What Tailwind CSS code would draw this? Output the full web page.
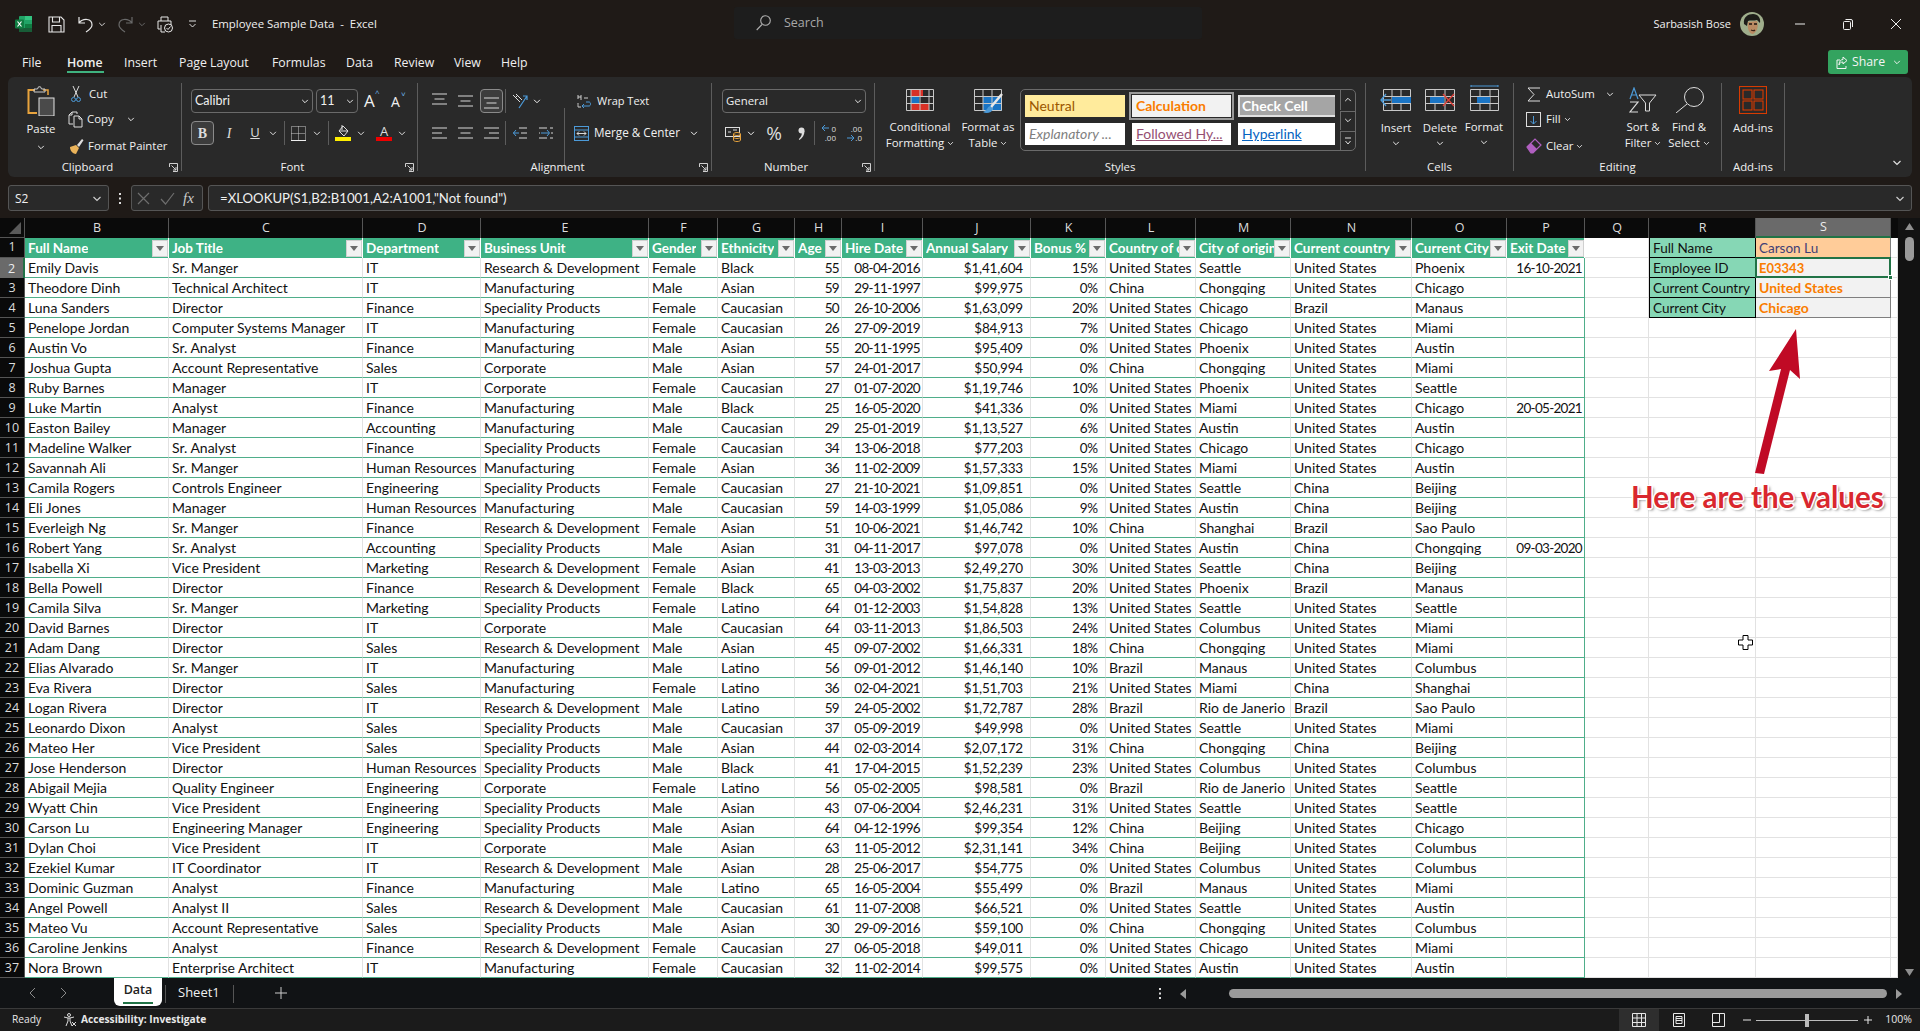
<!DOCTYPE html>
<html lang="en">
<head>
<meta charset="UTF-8">
<title>Employee Sample Data - Excel</title>
<script src="https://cdn.jsdelivr.net/npm/@tailwindcss/browser@4"></script>
</head>
<body class="bg-[#1f1a17]">
<svg class="hidden">
  <symbol id="chev" viewBox="0 0 10 6"><path d="M1.5 1l3.5 3.5L8.500 1" fill="none" stroke="currentColor" stroke-width="1.200"/></symbol>
  <symbol id="launch" viewBox="0 0 9 9"><path d="M.5 4V.5H8.500V8.500H4M2.500 2.500L7 7M7 4v3H4" fill="none" stroke="#d0d0d0" stroke-width="1"/></symbol>
  <symbol id="lines3" viewBox="0 0 15 12"><path d="M0 1h15M2.500 6h10M0 11h15" stroke="#d8d8d8" stroke-width="1" fill="none"/></symbol>
</svg>
<div class="w-[1920px] h-[1031px] flex flex-col overflow-hidden bg-[#1f1a17] text-[#f0f0f0] [font-family:'Open_Sans',sans-serif] text-[11.4px]">

  <!-- title bar -->
  <div class="h-[50px] shrink-0 flex items-center pb-[2px]">
    <div class="w-[212px] shrink-0 flex items-center pl-[15px]">
      <svg class="w-[17px] h-[16px]" viewBox="0 0 17 16"><rect x="4" width="13" height="16" rx="1" fill="#21a366"/><rect x="10" y="0" width="7" height="4" fill="#33c481"/><rect x="10" y="8" width="7" height="4" fill="#107c41"/><rect x="4" y="12" width="13" height="4" fill="#185c37"/><rect y="3.500" width="9" height="9" rx="1" fill="#107c41"/><path d="M2.500 5.500l4 5M6.500 5.500l-4 5" stroke="#fff" stroke-width="1.200"/></svg>
      <svg class="w-[17px] h-[17px] ml-[16px]" viewBox="0 0 17 17" fill="none" stroke="#e8e8e8" stroke-width="1.100"><path d="M1 1h12l3 3v12H1zM4.500 1v5h7V1M4 16v-6.500h9V16"/></svg>
      <svg class="w-[15px] h-[17px] ml-[13px]" viewBox="0 0 15 17" fill="none" stroke="#e8e8e8" stroke-width="1.200"><path d="M1 1v6h6M1 7c4-5 13-5 13 2 0 3-3 5-6 7"/></svg>
      <svg class="w-[8px] h-[5px] ml-[5px] text-[#ddd]"><use href="#chev"/></svg>
      <svg class="w-[15px] h-[17px] ml-[12px]" viewBox="0 0 15 17" fill="none" stroke="#6a6a6a" stroke-width="1.200"><path d="M14 1v6H8M14 7C10 2 1 2 1 9c0 3 3 5 6 7"/></svg>
      <svg class="w-[8px] h-[5px] ml-[5px] text-[#6a6a6a]"><use href="#chev"/></svg>
      <svg class="w-[17px] h-[17px] ml-[11px]" viewBox="0 0 17 17" fill="none" stroke="#e8e8e8" stroke-width="1"><path d="M4 5V1h7v4M3.500 13H1V5h13v4M4 9v7h4"/><circle cx="11.500" cy="12" r="4"/><path d="M9.500 12l1.500 1.500 2.500-3"/></svg>
      <svg class="w-[9px] h-[8px] ml-[14px]" viewBox="0 0 9 8" fill="none" stroke="#ddd" stroke-width="1"><path d="M1 1h7M1.500 4l3 3 3-3"/></svg>
    </div>
    <div class="w-[522px] shrink-0 whitespace-pre">Employee Sample Data  -  Excel</div>
    <div class="w-[468px] h-[32px] -mt-[2px] shrink-0 flex items-center pl-[22px] bg-[#1d1d1d] rounded-[3px] text-[#a8a8a8] text-[12.500px]">
      <svg class="w-[15px] h-[16px]" viewBox="0 0 15 16" fill="none" stroke="#b0b0b0" stroke-width="1.100"><circle cx="9.500" cy="5.500" r="4.800"/><path d="M6 9.500L.7 15"/></svg>
      <span class="ml-[13px]">Search</span>
    </div>
    <div class="flex-1"></div>
    <span class="mr-[9px] text-[11px]">Sarbasish Bose</span>
    <svg class="w-[24px] h-[24px]" viewBox="0 0 24 24"><circle cx="12" cy="12" r="12" fill="#9fae8c"/><path d="M4 12c-1-7 4-10 9-10s8 4 7 9l-3-3c-3 1-7 0-9 1l-1 5z" fill="#1c1c18"/><path d="M8 10c3 0 6-1 9-1 2 5 0 11-4 13-4 0-6-6-5-12z" fill="#b98a62"/><path d="M9 12h3M14 12h3" stroke="#1c1410" stroke-width="1.300"/><path d="M11 18c2 1 3 1 4 0" stroke="#3a2418" stroke-width="1.200" fill="none"/></svg>
    <div class="w-[12px]"></div>
    <div class="w-[144px] shrink-0 flex">
      <div class="w-[48px] flex justify-center"><svg class="w-[10px] h-[10px]" viewBox="0 0 10 10"><path d="M0 5h10" stroke="#eee"/></svg></div>
      <div class="w-[48px] flex justify-center"><svg class="w-[10px] h-[11px]" viewBox="0 0 10 11" fill="none" stroke="#eee"><rect x=".5" y="2.500" width="7" height="8" rx="1"/><path d="M2.500 .5h5.500a1.500 1.500 0 0 1 1.500 1.500v6"/></svg></div>
      <div class="w-[48px] flex justify-center"><svg class="w-[10px] h-[10px]" viewBox="0 0 10 10"><path d="M0 0l10 10M10 0L0 10" stroke="#eee"/></svg></div>
    </div>
  </div>

  <!-- ribbon tabs -->
  <div class="h-[27px] shrink-0 flex items-center pl-[22px] text-[12.300px]">
    <span class="w-[45px]">File</span>
    <span class="w-[57px] font-semibold relative">Home<span class="absolute left-0 top-[17px] w-[37px] h-[2px] bg-[#3fb27f]"></span></span>
    <span class="w-[55px]">Insert</span>
    <span class="w-[93px]">Page Layout</span>
    <span class="w-[74px]">Formulas</span>
    <span class="w-[48px]">Data</span>
    <span class="w-[60px]">Review</span>
    <span class="w-[47px]">View</span>
    <span>Help</span>
    <div class="ml-auto mr-[12px] -mt-[3px] w-[80px] h-[24px] bg-[#33a35f] rounded-[3px] flex items-center pl-[8px] text-[#f4f4f4]">
      <svg class="w-[12px] h-[13px]" viewBox="0 0 12 13" fill="none" stroke="#f4f4f4" stroke-width="1"><path d="M4 4H1v8.500h9V10M7 1l4 3.500L7 8V6C5 6 3.500 7 3 9c0-3 1.500-5.500 4-5.500z"/></svg>
      <span class="ml-[4px]">Share</span>
      <svg class="w-[8px] h-[5px] ml-[8px]"><use href="#chev"/></svg>
    </div>
  </div>

  <!-- ribbon -->
  <div class="h-[100px] shrink-0 mx-2 bg-[#292929] rounded-[6px] flex">

    <!-- clipboard -->
    <div class="w-[174px] h-[88px] mt-[6px] shrink-0 border-r border-[#5c5c5c]">
      <div class="h-[77px] flex pl-[13px]">
        <div class="w-[40px] flex flex-col items-center pt-[3px]">
          <svg class="w-[28px] h-[30px]" viewBox="0 0 28 30" fill="none"><path d="M8 4H1.500V27H10" stroke="#e8a33d" stroke-width="2"/><path d="M16 4h5v5" stroke="#e8a33d" stroke-width="1.500"/><path d="M7 6V3h3.500L11.500 .8l2 0L14.500 3H18v3z" stroke="#ccc" stroke-width="1"/><rect x="12" y="12" width="15" height="18" fill="#4a4a4a" stroke="#e4e4e4"/></svg>
          <span class="mt-[4px]">Paste</span>
          <svg class="w-[8px] h-[5px] mt-[8px]"><use href="#chev"/></svg>
        </div>
        <div class="ml-[10px] flex flex-col">
          <div class="h-[22px] flex items-center"><svg class="w-[10px] h-[17px]" viewBox="0 0 10 17" fill="none" stroke-width="1"><path d="M2 0l5 11M8 0L3 11" stroke="#ddd"/><circle cx="2.500" cy="13.500" r="2" stroke="#4c9ad8"/><circle cx="7.500" cy="13.500" r="2" stroke="#4c9ad8"/></svg><span class="ml-[8px]">Cut</span></div>
          <div class="h-[22px] mt-[3px] flex items-center"><svg class="w-[16px] h-[17px] -ml-[3px]" viewBox="0 0 16 17" fill="none" stroke="#ddd"><path d="M9 3V1H4L1 4v9h4M1 4h3V1"/><path d="M6 5h5l3 3v8H6zM11 5v3h3"/></svg><span class="ml-[3px]">Copy</span><svg class="w-[8px] h-[5px] ml-[13px]"><use href="#chev"/></svg></div>
          <div class="h-[22px] mt-[5px] flex items-center"><svg class="w-[15px] h-[17px] -ml-[2px]" viewBox="0 0 15 17"><path d="M1 9l6-2 3 3-3 6c-3 0-6-3-6-7z" fill="#eab35a"/><path d="M8 7l5-6 1.500 1.200L10 9z" fill="#ddd"/></svg><span class="ml-[4px]">Format Painter</span></div>
        </div>
      </div>
      <div class="h-[14px] flex items-center"><span class="flex-1 text-center">Clipboard</span><svg class="w-[9px] h-[9px] mr-[3px] ml-[2px]"><use href="#launch"/></svg></div>
    </div>

    <!-- font -->
    <div class="w-[236px] h-[88px] mt-[6px] shrink-0 border-r border-[#5c5c5c]">
      <div class="h-[77px] pl-[9px] pt-[6px]">
        <div class="h-[24px] flex items-center">
          <div class="w-[122px] h-[24px] border border-[#6a6a6a] rounded-[4px] flex items-center justify-between px-[3px] [font-family:Lato,sans-serif] text-[12.500px]">Calibri<svg class="w-[8px] h-[5px]"><use href="#chev"/></svg></div>
          <div class="w-[42px] h-[24px] ml-[3px] border border-[#6a6a6a] rounded-[4px] flex items-center justify-between px-[3px] [font-family:Lato,sans-serif] text-[12.500px]">11<svg class="w-[8px] h-[5px]"><use href="#chev"/></svg></div>
          <span class="w-[16px] ml-[6px] text-[17px] relative">A<span class="absolute left-[11px] -top-[1px] text-[8px] text-[#6db3e8]">^</span></span>
          <span class="w-[16px] ml-[11px] text-[14px] relative">A<span class="absolute left-[10px] -top-[3px] text-[8px] text-[#6db3e8]">˅</span></span>
        </div>
        <div class="h-[24px] mt-[8px] flex items-center text-[#ddd]">
          <div class="w-[23px] h-[24px] border border-[#8a8a8a] bg-[#3c3c3c] rounded-[4px] flex items-center justify-center font-bold [font-family:'Liberation_Serif',serif] text-[14px]">B</div>
          <span class="w-[20px] ml-[5px] text-center italic [font-family:'Liberation_Serif',serif] text-[14px]">I</span>
          <span class="w-[20px] ml-[6px] text-center underline text-[13px]">U</span>
          <svg class="w-[10px] h-[5px] ml-[3px]"><use href="#chev"/></svg>
          <div class="w-px h-[24px] ml-[6px] bg-[#5c5c5c]"></div>
          <svg class="w-[15px] h-[15px] ml-[6px]" viewBox="0 0 15 15" fill="none" stroke="#ccc" stroke-dasharray="1 1"><path d="M.5.5h14v14H.5zM7.500.5v14M.5 7.500h14"/><path d="M0 14.500h15" stroke-dasharray="none" stroke="#eee"/></svg>
          <svg class="w-[10px] h-[5px] ml-[6px]"><use href="#chev"/></svg>
          <div class="w-px h-[24px] ml-[6px] bg-[#5c5c5c]"></div>
          <div class="w-[16px] ml-[6px] flex flex-col items-center"><svg class="w-[13px] h-[12px]" viewBox="0 0 13 12" fill="none" stroke="#ddd"><path d="M6 1l5 5-4 5-5-5zM2 6h9"/><path d="M5 0v5" /></svg><div class="w-[16px] h-[4px] bg-[#ffee00]"></div></div>
          <svg class="w-[10px] h-[5px] ml-[5px]"><use href="#chev"/></svg>
          <div class="w-[16px] ml-[10px] flex flex-col items-center leading-[12px] text-[13px]">A<div class="w-[16px] h-[4px] bg-[#ee0000]"></div></div>
          <svg class="w-[10px] h-[5px] ml-[5px]"><use href="#chev"/></svg>
        </div>
      </div>
      <div class="h-[14px] flex items-center"><span class="flex-1 text-center">Font</span><svg class="w-[9px] h-[9px] mr-[3px] ml-[2px]"><use href="#launch"/></svg></div>
    </div>

    <!-- alignment -->
    <div class="w-[294px] h-[88px] mt-[6px] shrink-0 border-r border-[#5c5c5c]">
      <div class="h-[77px] pl-[14px] pt-[6px]">
        <div class="h-[24px] flex items-center">
          <svg class="w-[15px] h-[12px] mb-[4px]"><use href="#lines3"/></svg>
          <svg class="w-[15px] h-[12px] ml-[11px]"><use href="#lines3"/></svg>
          <div class="w-[23px] h-[24px] ml-[7px] border border-[#8a8a8a] bg-[#3c3c3c] rounded-[4px] flex items-end justify-center pb-[3px]"><svg class="w-[15px] h-[12px]"><use href="#lines3"/></svg></div>
          <div class="w-px h-[24px] ml-[2px] bg-[#5c5c5c]"></div>
          <svg class="w-[17px] h-[17px] ml-[6px]" viewBox="0 0 17 17" fill="none"><path d="M1 2l7 7M4 1l6 6M3 5l3-3" stroke="#ddd"/><path d="M7 15L15 3M11 3h4v4" stroke="#4c9ad8" stroke-width="1.200"/></svg>
          <svg class="w-[10px] h-[5px] ml-[3px]"><use href="#chev"/></svg>
          <div class="w-px h-[62px] ml-[22px] mt-[38px] -mb-[38px] bg-[#5c5c5c] shrink-0"></div>
          <svg class="w-[14px] h-[17px] ml-[12px]" viewBox="0 0 14 17" fill="none"><path d="M1 6V2M1 4h3M4 2v5M7 5h4M1 10c0 2 0 4 0 4h3" stroke="#cfcfcf"/><path d="M9 9h3c2 0 2 4 0 4H5m2-2l-2 2 2 2" stroke="#4c9ad8"/></svg>
          <span class="ml-[6px] text-[11px]">Wrap Text</span>
        </div>
        <div class="h-[24px] mt-[8px] flex items-center">
          <svg class="w-[15px] h-[12px]" viewBox="0 0 15 12" fill="none" stroke="#d8d8d8"><path d="M0 1h15M0 6h10M0 11h15"/></svg>
          <svg class="w-[15px] h-[12px] ml-[11px]"><use href="#lines3"/></svg>
          <svg class="w-[15px] h-[12px] ml-[11px]" viewBox="0 0 15 12" fill="none" stroke="#d8d8d8"><path d="M0 1h15M5 6h10M0 11h15"/></svg>
          <div class="w-px h-[24px] ml-[6px] bg-[#5c5c5c]"></div>
          <svg class="w-[14px] h-[12px] ml-[7px]" viewBox="0 0 14 12" fill="none"><path d="M6 1h8M8 6h6M6 11h8" stroke="#d8d8d8"/><path d="M6 6H0M3 3L.5 6 3 9" stroke="#4c9ad8"/></svg>
          <svg class="w-[14px] h-[12px] ml-[12px]" viewBox="0 0 14 12" fill="none"><path d="M0 1h8M0 6h1M0 11h8" stroke="#d8d8d8"/><path d="M2 6h8M8 3l2.500 3L8 9" stroke="#4c9ad8"/><path d="M11 1h3M12 6h2M11 11h3" stroke="#d8d8d8"/></svg>
          <svg class="w-[15px] h-[15px] ml-[21px]" viewBox="0 0 15 15" fill="none"><rect x=".5" y=".5" width="14" height="14" stroke="#4c9ad8"/><path d="M0 4h15M0 11h15" stroke="#4c9ad8"/><path d="M3 7.500h9M5 5.500l-2 2 2 2M10 5.500l2 2-2 2" stroke="#d8d8d8"/></svg>
          <span class="ml-[5px] w-[95px] text-[11.700px]">Merge &amp; Center</span>
          <svg class="w-[10px] h-[5px]"><use href="#chev"/></svg>
        </div>
      </div>
      <div class="h-[14px] flex items-center"><span class="flex-1 text-center">Alignment</span><svg class="w-[9px] h-[9px] mr-[3px] ml-[2px]"><use href="#launch"/></svg></div>
    </div>

    <!-- number -->
    <div class="w-[163px] h-[88px] mt-[6px] shrink-0 border-r border-[#5c5c5c]">
      <div class="h-[77px] pl-[10px] pt-[6px]">
        <div class="w-[144px] h-[24px] border border-[#6a6a6a] rounded-[4px] flex items-center justify-between px-[3px]">General<svg class="w-[8px] h-[5px]"><use href="#chev"/></svg></div>
        <div class="h-[24px] mt-[8px] flex items-center">
          <svg class="w-[16px] h-[17px] ml-[3px]" viewBox="0 0 16 17" fill="none"><rect x=".5" y="2.500" width="14" height="9" stroke="#ddd"/><path d="M3 7h3M8 5h4" stroke="#ddd"/><ellipse cx="12" cy="9" rx="3.500" ry="1.500" fill="#292929" stroke="#e8a33d"/><path d="M8.500 9v6c0 2 7 2 7 0V9M8.500 12c0 2 7 2 7 0" stroke="#e8a33d"/></svg>
          <svg class="w-[10px] h-[5px] ml-[5px]"><use href="#chev"/></svg>
          <span class="w-[16px] ml-[10px] text-center text-[19px] text-[#ddd]">%</span>
          <svg class="w-[10px] h-[13px] ml-[14px]" viewBox="0 0 10 13" fill="#ddd"><circle cx="5.500" cy="3.500" r="3"/><path d="M8.500 4c0 4-2 7-5 9l-.7-.8C5 10 6 8 6 5z"/></svg>
          <div class="w-px h-[24px] ml-[8px] bg-[#5c5c5c]"></div>
          <div class="w-[15px] ml-[6px] text-[8px] leading-[9px] text-right text-[#ddd] relative">0<br>.00<svg class="absolute left-0 top-0 w-[8px] h-[8px]" viewBox="0 0 8 8" fill="none" stroke="#4c9ad8"><path d="M8 4H1M4 1L1 4l3 3"/></svg></div>
          <div class="w-[15px] ml-[11px] text-[8px] leading-[9px] text-right text-[#ddd] relative">.00<br>.0<svg class="absolute left-0 bottom-0 w-[8px] h-[8px]" viewBox="0 0 8 8" fill="none" stroke="#4c9ad8"><path d="M0 4h7M4 1l3 3-3 3"/></svg></div>
        </div>
      </div>
      <div class="h-[14px] flex items-center"><span class="flex-1 text-center">Number</span><svg class="w-[9px] h-[9px] mr-[3px] ml-[2px]"><use href="#launch"/></svg></div>
    </div>

    <!-- styles -->
    <div class="w-[491px] h-[88px] mt-[6px] shrink-0 border-r border-[#5c5c5c]">
      <div class="h-[77px] pt-[6px] flex pl-[13px]">
        <div class="w-[64px] flex flex-col items-center text-center leading-[16px]">
          <svg class="w-[28px] h-[22px]" viewBox="0 0 28 22" fill="none"><rect x="5" y="0" width="12" height="7" fill="#d93025"/><rect x="5" y="8" width="8" height="6" fill="#1a74c4"/><rect x="5" y="15" width="18" height="7" fill="#d93025"/><path d="M.5.500h27v21H.5zM0 7.500h28M0 14.500h28M5 0v22M14 0v22M23 0v22" stroke="#c8c8c8"/></svg>
          <span class="mt-[8px]">Conditional</span>
          <span class="whitespace-nowrap">Formatting <svg class="inline w-[7px] h-[5px] align-middle"><use href="#chev"/></svg></span>
        </div>
        <div class="w-[64px] ml-[4px] flex flex-col items-center text-center leading-[16px]">
          <svg class="w-[29px] h-[26px] -mb-[4px]" viewBox="0 0 29 26" fill="none"><rect x="9" y="8" width="19" height="14" fill="#1a74c4"/><path d="M.5.500h27v21H.5zM0 7.500h28M0 14.500h28M9 0v22M18 0v22" stroke="#c8c8c8"/><path d="M28 5L17 18" stroke="#e8e8e8" stroke-width="2.500"/><path d="M16 17c-3 1-2 4-7 6 3 2 9 1 10-3z" fill="#4c9ad8"/></svg>
          <span class="mt-[8px]">Format as</span>
          <span class="whitespace-nowrap">Table <svg class="inline w-[7px] h-[5px] align-middle"><use href="#chev"/></svg></span>
        </div>
        <div class="w-[336px] h-[62px] border border-[#6a6a6a] rounded-[5px] flex [font-family:Lato,sans-serif] text-[14px]">
          <div class="pl-[4px] pt-[5px] grid grid-cols-[100px_99px_99px] auto-rows-[22px] gap-x-[7px] gap-y-[6px] w-[315px] overflow-hidden">
            <div class="bg-[#ffeb9c] text-[#9c5700] pl-[4px] leading-[22px]">Neutral</div>
            <div class="bg-[#f2f2f2] text-[#fa7d00] font-bold pl-[4px] leading-[22px] outline-2 outline-[#9a9a9a] outline-offset-1 truncate">Calculation</div>
            <div class="bg-[#a5a5a5] text-white font-bold pl-[2px] leading-[18px] border-2 border-double border-[#e0e0e0] truncate">Check Cell</div>
            <div class="bg-white text-[#7f7f7f] italic pl-[4px] leading-[22px]">Explanatory ...</div>
            <div class="bg-white text-[#954f72] underline pl-[4px] leading-[22px]">Followed Hy...</div>
            <div class="bg-white text-[#0563c1] underline pl-[4px] leading-[22px]">Hyperlink</div>
          </div>
          <div class="w-[15px] ml-[5px] flex flex-col gap-[1px]">
            <div class="h-[20px] border-l border-[#6a6a6a] flex items-center justify-center"><svg class="w-[8px] h-[5px] rotate-180"><use href="#chev"/></svg></div>
            <div class="h-[20px] border-l border-t border-[#6a6a6a] flex items-center justify-center"><svg class="w-[8px] h-[5px]"><use href="#chev"/></svg></div>
            <div class="h-[19px] border-l border-t border-[#6a6a6a] flex items-center justify-center"><svg class="w-[8px] h-[8px]" viewBox="0 0 8 8" fill="none" stroke="#e0e0e0"><path d="M1 1h6M1.500 4l2.500 3 2.500-3"/></svg></div>
          </div>
        </div>
      </div>
      <div class="h-[14px] leading-[14px] text-center">Styles</div>
    </div>

    <!-- cells -->
    <div class="w-[148px] h-[88px] mt-[6px] shrink-0 border-r border-[#5c5c5c]">
      <div class="h-[77px] pt-[6px] pl-[8px] flex">
        <div class="w-[44px] flex flex-col items-center">
          <svg class="w-[32px] h-[22px]" viewBox="0 0 32 22" fill="none"><path d="M3.500.500h27v21h-27zM3 7.500h28M3 14.500h28M12 0v22M21 0v22" stroke="#c8c8c8"/><rect x="12" y="8" width="19" height="6" fill="#1a74c4"/><path d="M11 11H1M6 5l-5 6 5 6" stroke="#4c9ad8" stroke-width="1.300"/></svg>
          <span class="mt-[9px] h-[16px] leading-[16px]">Insert</span>
          <svg class="w-[8px] h-[5px] mt-[5px]"><use href="#chev"/></svg>
        </div>
        <div class="w-[44px] flex flex-col items-center">
          <svg class="w-[30px] h-[22px]" viewBox="0 0 30 22" fill="none"><path d="M.5.500h29v21H.5zM0 7.500h30M0 14.500h30M10 0v22M20 0v22" stroke="#c8c8c8"/><rect x="5" y="8" width="14" height="6" fill="#1a74c4"/><path d="M18 5l11 12M29 5L18 17" stroke="#e0413a" stroke-width="1.300"/></svg>
          <span class="mt-[9px] h-[16px] leading-[16px]">Delete</span>
          <svg class="w-[8px] h-[5px] mt-[5px]"><use href="#chev"/></svg>
        </div>
        <div class="w-[44px] flex flex-col items-center">
          <svg class="w-[29px] h-[26px] -mt-[4px]" viewBox="0 0 29 26" fill="none"><path d="M1 1h27M1 0v2M28 0v2" stroke="#4c9ad8"/><path d="M.5 4.500h28v21H.5zM0 11.500h29M0 18.500h29M10 4v22M20 4v22" stroke="#c8c8c8"/><rect x="7" y="12" width="13" height="6" fill="#1a74c4"/></svg>
          <span class="mt-[8px] h-[16px] leading-[16px]">Format</span>
          <svg class="w-[8px] h-[5px] mt-[5px]"><use href="#chev"/></svg>
        </div>
      </div>
      <div class="h-[14px] leading-[14px] text-center">Cells</div>
    </div>

    <!-- editing -->
    <div class="w-[208px] h-[88px] mt-[6px] shrink-0 border-r border-[#5c5c5c]">
      <div class="h-[77px] pl-[12px] flex">
        <div class="w-[94px] flex flex-col">
          <div class="h-[22px] flex items-center"><svg class="w-[14px] h-[15px] ml-[1px]" viewBox="0 0 14 15" fill="none" stroke="#ddd"><path d="M13 1H1l6 6.500L1 14h12"/></svg><span class="ml-[5px]">AutoSum</span><svg class="w-[8px] h-[5px] ml-[11px]"><use href="#chev"/></svg></div>
          <div class="h-[22px] mt-[3px] flex items-center"><svg class="w-[15px] h-[15px]" viewBox="0 0 15 15" fill="none"><rect x=".5" y=".5" width="14" height="14" stroke="#ddd"/><path d="M7.500 4v8M4.500 9l3 3 3-3" stroke="#4c9ad8"/></svg><span class="ml-[5px]">Fill</span><svg class="w-[7px] h-[5px] ml-[3px]"><use href="#chev"/></svg></div>
          <div class="h-[22px] mt-[5px] flex items-center"><svg class="w-[16px] h-[16px]" viewBox="0 0 16 16"><path d="M1 9l8-8 6 6-8 8h-2z" fill="none" stroke="#b05fc0" stroke-width="1.200"/><path d="M1 9l4-4 6 6-4 4h-2z" fill="#b05fc0"/></svg><span class="ml-[4px]">Clear</span><svg class="w-[7px] h-[5px] ml-[3px]"><use href="#chev"/></svg></div>
        </div>
        <div class="w-[46px] pt-[4px] flex flex-col items-center text-center leading-[16px]">
          <svg class="w-[28px] h-[26px]" viewBox="0 0 28 26" fill="none"><path d="M1 12L5 1l4 11M2.500 8h5" stroke="#4c9ad8" stroke-width="1.200"/><path d="M1 15h8L1 25h8" stroke="#ddd" stroke-width="1.200"/><path d="M10 8h17l-6.500 8v8h-4v-8z" stroke="#ddd"/></svg>
          <span class="mt-[6px]">Sort &amp;</span>
          <span class="whitespace-nowrap">Filter <svg class="inline w-[7px] h-[5px] align-middle"><use href="#chev"/></svg></span>
        </div>
        <div class="w-[46px] pt-[4px] flex flex-col items-center text-center leading-[16px]">
          <svg class="w-[29px] h-[26px]" viewBox="0 0 29 26" fill="none" stroke="#ddd"><circle cx="19" cy="10" r="9.500"/><path d="M12 17L1 26"/></svg>
          <span class="mt-[6px]">Find &amp;</span>
          <span class="whitespace-nowrap">Select <svg class="inline w-[7px] h-[5px] align-middle"><use href="#chev"/></svg></span>
        </div>
      </div>
      <div class="h-[14px] leading-[14px] text-center">Editing</div>
    </div>

    <!-- add-ins -->
    <div class="w-[63px] h-[88px] mt-[6px] shrink-0 border-r border-[#5c5c5c]">
      <div class="h-[77px] pt-[3px] flex flex-col items-center leading-[16px]">
        <svg class="w-[28px] h-[28px]" viewBox="0 0 28 28" fill="none" stroke="#d83b01" stroke-width="1.100"><rect x=".5" y=".5" width="27" height="27"/><rect x="4" y="4" width="9" height="9"/><rect x="15" y="4" width="9" height="9"/><rect x="4" y="15" width="9" height="9"/><rect x="15" y="15" width="9" height="9"/></svg>
        <span class="mt-[6px]">Add-ins</span>
      </div>
      <div class="h-[14px] leading-[14px] text-center">Add-ins</div>
    </div>

    <div class="ml-auto self-end pb-[11px] pr-[10px]"><svg class="block w-[10px] h-[6px] text-[#e0e0e0]"><use href="#chev"/></svg></div>
  </div>

  <!-- formula bar -->
  <div class="h-[26px] shrink-0 mt-[8px] mx-2 flex items-stretch">
    <div class="w-[101px] bg-[#292929] border border-[#555] rounded-[3px] flex items-center justify-between px-[6px] pt-px text-[12px]">S2<svg class="w-[10px] h-[6px] text-[#ccc]"><use href="#chev"/></svg></div>
    <div class="w-[22px] flex items-center justify-center text-[#ccc]"><svg class="w-[2px] h-[11px]" viewBox="0 0 2 11" fill="#ddd"><rect width="2" height="2"/><rect y="4.500" width="2" height="2"/><rect y="9" width="2" height="2"/></svg></div>
    <div class="w-[72px] bg-[#292929] border border-[#555] rounded-[3px] flex items-center pl-[5px]">
      <svg class="w-[13px] h-[13px]" viewBox="0 0 13 13" fill="none" stroke="#6e6e6e" stroke-width="1.200"><path d="M1 1l11 11M12 1L1 12"/></svg>
      <svg class="w-[15px] h-[13px] ml-[10px]" viewBox="0 0 15 13" fill="none" stroke="#6e6e6e" stroke-width="1.200"><path d="M1 7l4.500 5L14 1"/></svg>
      <span class="ml-[8px] italic text-[15px] text-[#ccc] [font-family:'Liberation_Serif',serif]">fx</span>
    </div>
    <div class="ml-[5px] flex-1 bg-[#292929] border border-[#555] rounded-[3px] flex items-center justify-between pl-[11px] pr-[6px] pt-px [font-family:Lato,sans-serif] text-[13.200px]">=XLOOKUP(S1,B2:B1001,A2:A1001,"Not found")<svg class="w-[10px] h-[6px] text-[#ccc]"><use href="#chev"/></svg></div>
  </div>

  <!-- sheet -->
  <div class="h-[760px] shrink-0 mt-[7px] flex relative bg-[#121212]">
    <div id="sheet" class="w-[1898px] shrink-0 grid grid-cols-[25px_144px_194px_118px_168px_69px_77px_47px_81px_108px_75px_90px_95px_121px_95px_78px_64px_107px_135px_7px] auto-rows-[20px] [font-family:Lato,sans-serif] text-[13.500px] text-[#111]"></div>
    <div class="flex-1 flex flex-col items-center pt-[5px]">
      <svg class="w-[9px] h-[7px]" viewBox="0 0 9 7" fill="#8f8f8f"><path d="M4.500 0L9 7H0z"/></svg>
      <div class="w-[9px] h-[24px] mt-[7px] rounded-full bg-[#9a9a9a]"></div>
      <svg class="w-[9px] h-[7px] mt-auto mb-[2px]" viewBox="0 0 9 7" fill="#8f8f8f"><path d="M4.500 7L9 0H0z"/></svg>
    </div>

    <!-- annotation drawn over the sheet -->
    <svg class="absolute left-[1740px] top-[105px] w-[70px] h-[155px]" viewBox="1740 323 70 155"><polygon points="1796,329 1800,379 1790,370 1764,474 1755,473 1781,369 1769,371" fill="#c00a25"/></svg>
    <div class="absolute left-[1631px] top-[263px] whitespace-nowrap text-[#d9272e] text-[29.500px] leading-[32px] font-bold [font-family:Lato,sans-serif] [text-shadow:1.500px_0_#fff,-1.500px_0_#fff,0_1.500px_#fff,0_-1.500px_#fff,1px_1px_#fff,-1px_-1px_#fff,1px_-1px_#fff,-1px_1px_#fff,2px_2px_3px_rgba(0,0,0,0.6)]">Here are the values</div>
    <svg class="absolute left-[1738px] top-[417px] w-[15px] h-[15px]" viewBox="0 0 15 15"><path d="M5 .5h5v4.500h4.500v5H10v4.500H5V10H.5V5H5z" fill="#fff" stroke="#000"/></svg>
  </div>

  <!-- sheet tabs -->
  <div class="h-[31px] shrink-0 flex items-start bg-[#111315] border-b border-[#3a3a3a]">
    <svg class="w-[7px] h-[12px] ml-[29px] mt-[9px]" viewBox="0 0 7 12" fill="none" stroke="#8a8a8a"><path d="M6 1L1 6l5 5"/></svg>
    <svg class="w-[7px] h-[12px] ml-[24px] mt-[9px]" viewBox="0 0 7 12" fill="none" stroke="#8a8a8a"><path d="M1 1l5 5-5 5"/></svg>
    <div class="w-[48px] h-[28px] ml-[47px] bg-white rounded-b-[6px] text-[#222] text-[12.500px] font-semibold flex flex-col items-center pt-[3px]">Data<div class="w-[30px] h-[2px] bg-[#217346] mt-[2px]"></div></div>
    <div class="w-px h-[18px] ml-[3px] mt-[7px] bg-[#555]"></div>
    <span class="ml-[12px] mt-[5px] text-[13px]">Sheet1</span>
    <div class="w-px h-[18px] ml-[13px] mt-[7px] bg-[#555]"></div>
    <svg class="w-[12px] h-[12px] ml-[41px] mt-[9px]" viewBox="0 0 12 12" stroke="#ccc"><path d="M6 0v12M0 6h12"/></svg>
    <div class="ml-auto flex items-center h-[31px]">
      <svg class="w-[2px] h-[11px]" viewBox="0 0 2 11" fill="#ddd"><rect width="2" height="2"/><rect y="4.500" width="2" height="2"/><rect y="9" width="2" height="2"/></svg>
      <svg class="w-[6px] h-[10px] ml-[19px]" viewBox="0 0 6 10" fill="#9a9a9a"><path d="M6 0v10L0 5z"/></svg>
      <div class="w-[658px] h-[9px] ml-[43px] rounded-full bg-[#9a9a9a]"></div>
      <svg class="w-[6px] h-[10px] ml-[9px] mr-[18px]" viewBox="0 0 6 10" fill="#9a9a9a"><path d="M0 0v10l6-5z"/></svg>
    </div>
  </div>

  <!-- status bar -->
  <div class="h-[22px] shrink-0 flex items-center bg-[#1b1b1b] text-[#e8e8e8] text-[10.200px]">
    <span class="ml-[12px]">Ready</span>
    <svg class="w-[14px] h-[14px] ml-[22px]" viewBox="0 0 14 14" fill="none" stroke="#ddd"><circle cx="6" cy="2" r="1.500"/><path d="M1 4l4 1h2l4-1M5 5v3l-2 5M7 5v3l2 5"/><path d="M9 9l4 4M13 9l-4 4"/></svg>
    <span class="ml-[4px] font-bold">Accessibility: Investigate</span>
    <div class="ml-auto w-[40px] h-[22px] bg-[#2e2e2e] flex items-center justify-center"><svg class="w-[14px] h-[14px]" viewBox="0 0 14 14" fill="none" stroke="#e8e8e8"><path d="M.5.5h13v13H.5zM.5 5h13M.5 9.500h13M5 .5v13M9.500 .5v13"/></svg></div>
    <svg class="w-[12px] h-[14px] ml-[14px]" viewBox="0 0 12 14" fill="none" stroke="#e8e8e8"><path d="M.5.5h11v13H.5zM3 3.500h6v7H3zM3 5.500h6M3 7.500h6"/></svg>
    <svg class="w-[13px] h-[14px] ml-[27px]" viewBox="0 0 13 14" fill="none" stroke="#e8e8e8"><path d="M.5.5h12v13H.5zM.5 9.500h7v-9"/></svg>
    <svg class="w-[8px] h-[8px] ml-[18px]" viewBox="0 0 8 8" stroke="#e8e8e8"><path d="M0 4h8"/></svg>
    <div class="w-[102px] h-px ml-[5px] bg-[#bbb] relative"><div class="absolute left-[49px] -top-[6px] w-[4px] h-[13px] bg-[#bbb]"></div></div>
    <svg class="w-[8px] h-[8px] ml-[6px]" viewBox="0 0 8 8" stroke="#e8e8e8"><path d="M0 4h8M4 0v8"/></svg>
    <span class="ml-[13px] mr-[8px] text-[10.500px]">100%</span>
  </div>
</div>

<script>
// B..P, pipe separated as they sit in the workbook
const data = `Emily Davis|Sr. Manger|IT|Research & Development|Female|Black|55|08-04-2016|$1,41,604|15%|United States|Seattle|United States|Phoenix|16-10-2021
Theodore Dinh|Technical Architect|IT|Manufacturing|Male|Asian|59|29-11-1997|$99,975|0%|China|Chongqing|United States|Chicago|
Luna Sanders|Director|Finance|Speciality Products|Female|Caucasian|50|26-10-2006|$1,63,099|20%|United States|Chicago|Brazil|Manaus|
Penelope Jordan|Computer Systems Manager|IT|Manufacturing|Female|Caucasian|26|27-09-2019|$84,913|7%|United States|Chicago|United States|Miami|
Austin Vo|Sr. Analyst|Finance|Manufacturing|Male|Asian|55|20-11-1995|$95,409|0%|United States|Phoenix|United States|Austin|
Joshua Gupta|Account Representative|Sales|Corporate|Male|Asian|57|24-01-2017|$50,994|0%|China|Chongqing|United States|Miami|
Ruby Barnes|Manager|IT|Corporate|Female|Caucasian|27|01-07-2020|$1,19,746|10%|United States|Phoenix|United States|Seattle|
Luke Martin|Analyst|Finance|Manufacturing|Male|Black|25|16-05-2020|$41,336|0%|United States|Miami|United States|Chicago|20-05-2021
Easton Bailey|Manager|Accounting|Manufacturing|Male|Caucasian|29|25-01-2019|$1,13,527|6%|United States|Austin|United States|Austin|
Madeline Walker|Sr. Analyst|Finance|Speciality Products|Female|Caucasian|34|13-06-2018|$77,203|0%|United States|Chicago|United States|Chicago|
Savannah Ali|Sr. Manger|Human Resources|Manufacturing|Female|Asian|36|11-02-2009|$1,57,333|15%|United States|Miami|United States|Austin|
Camila Rogers|Controls Engineer|Engineering|Speciality Products|Female|Caucasian|27|21-10-2021|$1,09,851|0%|United States|Seattle|China|Beijing|
Eli Jones|Manager|Human Resources|Manufacturing|Male|Caucasian|59|14-03-1999|$1,05,086|9%|United States|Austin|China|Beijing|
Everleigh Ng|Sr. Manger|Finance|Research & Development|Female|Asian|51|10-06-2021|$1,46,742|10%|China|Shanghai|Brazil|Sao Paulo|
Robert Yang|Sr. Analyst|Accounting|Speciality Products|Male|Asian|31|04-11-2017|$97,078|0%|United States|Austin|China|Chongqing|09-03-2020
Isabella Xi|Vice President|Marketing|Research & Development|Female|Asian|41|13-03-2013|$2,49,270|30%|United States|Seattle|China|Beijing|
Bella Powell|Director|Finance|Research & Development|Female|Black|65|04-03-2002|$1,75,837|20%|United States|Phoenix|Brazil|Manaus|
Camila Silva|Sr. Manger|Marketing|Speciality Products|Female|Latino|64|01-12-2003|$1,54,828|13%|United States|Seattle|United States|Seattle|
David Barnes|Director|IT|Corporate|Male|Caucasian|64|03-11-2013|$1,86,503|24%|United States|Columbus|United States|Miami|
Adam Dang|Director|Sales|Research & Development|Male|Asian|45|09-07-2002|$1,66,331|18%|China|Chongqing|United States|Miami|
Elias Alvarado|Sr. Manger|IT|Manufacturing|Male|Latino|56|09-01-2012|$1,46,140|10%|Brazil|Manaus|United States|Columbus|
Eva Rivera|Director|Sales|Manufacturing|Female|Latino|36|02-04-2021|$1,51,703|21%|United States|Miami|China|Shanghai|
Logan Rivera|Director|IT|Research & Development|Male|Latino|59|24-05-2002|$1,72,787|28%|Brazil|Rio de Janerio|Brazil|Sao Paulo|
Leonardo Dixon|Analyst|Sales|Speciality Products|Male|Caucasian|37|05-09-2019|$49,998|0%|United States|Seattle|United States|Miami|
Mateo Her|Vice President|Sales|Speciality Products|Male|Asian|44|02-03-2014|$2,07,172|31%|China|Chongqing|China|Beijing|
Jose Henderson|Director|Human Resources|Speciality Products|Male|Black|41|17-04-2015|$1,52,239|23%|United States|Columbus|United States|Columbus|
Abigail Mejia|Quality Engineer|Engineering|Corporate|Female|Latino|56|05-02-2005|$98,581|0%|Brazil|Rio de Janerio|United States|Seattle|
Wyatt Chin|Vice President|Engineering|Speciality Products|Male|Asian|43|07-06-2004|$2,46,231|31%|United States|Seattle|United States|Seattle|
Carson Lu|Engineering Manager|Engineering|Speciality Products|Male|Asian|64|04-12-1996|$99,354|12%|China|Beijing|United States|Chicago|
Dylan Choi|Vice President|IT|Corporate|Male|Asian|63|11-05-2012|$2,31,141|34%|China|Beijing|United States|Columbus|
Ezekiel Kumar|IT Coordinator|IT|Research & Development|Male|Asian|28|25-06-2017|$54,775|0%|United States|Columbus|United States|Columbus|
Dominic Guzman|Analyst|Finance|Manufacturing|Male|Latino|65|16-05-2004|$55,499|0%|Brazil|Manaus|United States|Miami|
Angel Powell|Analyst II|Sales|Research & Development|Male|Caucasian|61|11-07-2008|$66,521|0%|United States|Seattle|United States|Austin|
Mateo Vu|Account Representative|Sales|Speciality Products|Male|Asian|30|29-09-2016|$59,100|0%|China|Chongqing|United States|Columbus|
Caroline Jenkins|Analyst|Finance|Research & Development|Female|Caucasian|27|06-05-2018|$49,011|0%|United States|Chicago|United States|Miami|
Nora Brown|Enterprise Architect|IT|Manufacturing|Female|Caucasian|32|11-02-2014|$99,575|0%|United States|Austin|United States|Austin|`.split('\n').map(r => r.split('|'));

const headers = ['Full Name','Job Title','Department','Business Unit','Gender','Ethnicity','Age','Hire Date','Annual Salary','Bonus %','Country of origin','City of origin','Current country','Current City','Exit Date'];
const letters = 'BCDEFGHIJKLMNOPQRS'.split('');

// lookup box on the right, rows 1..4
const lookup = [['Full Name','Carson Lu'],['Employee ID','E03343'],['Current Country','United States'],['Current City','Chicago']];

const filterBtn = '<span class="ml-auto w-[16px] h-[17px] shrink-0 bg-[#f2f2f2] border border-[#d0d0d0] flex items-center justify-center"><svg class="w-[8px] h-[5px]" viewBox="0 0 8 5" fill="#6b6b6b"><path d="M0 0h8L4 5z"/></svg></span>';

const gridCell = 'bg-white border-r border-b border-[#e2e2e2]';
const tableLeft = 'bg-white border-r border-r-[#e2e2e2] border-b border-b-[#4fae8a] pl-[3px] pt-px text-[14px] leading-[18px] whitespace-nowrap overflow-hidden';
const tableRight = 'bg-white border-r border-r-[#e2e2e2] border-b border-b-[#4fae8a] pr-[2px] pt-px text-right leading-[18px] tracking-[-0.7px] whitespace-nowrap overflow-hidden';
const tableMoney = 'bg-white border-r border-r-[#e2e2e2] border-b border-b-[#4fae8a] pr-[7px] pt-px text-right leading-[18px] tracking-[-0.2px] whitespace-nowrap overflow-hidden';
const tableLast = 'bg-white border-r border-r-[#4fae8a] border-b border-b-[#4fae8a] pr-[2px] pt-px text-right leading-[18px] tracking-[-0.7px] whitespace-nowrap overflow-hidden';

function cellClass(col) {
  if (col === 14) return tableLast;
  if (col === 8 || col === 9) return tableMoney;
  if (col === 6 || col === 7) return tableRight;
  return tableLeft;
}

let html = '<div class="bg-[#0a0a0a] border-r border-b border-[#555] flex items-end justify-end p-[3px]"><svg class="w-[12px] h-[12px]" viewBox="0 0 12 12" fill="#5a5a5a"><path d="M12 0v12H0z"/></svg></div>';
letters.forEach(l => {
  html += l === 'S'
    ? '<div class="bg-[#6a6a6a] border-r border-[#555] border-b-2 border-b-[#217346] flex items-center justify-center pl-px text-[#eee] text-[12.500px] [font-family:\'Open_Sans\',sans-serif]">' + l + '</div>'
    : '<div class="bg-[#0a0a0a] border-r border-[#555] flex items-center justify-center pl-px text-[#ddd] text-[12.500px] [font-family:\'Open_Sans\',sans-serif]">' + l + '</div>';
});
html += '<div class="bg-[#0a0a0a]"></div>';

for (let r = 1; r <= 37; r++) {
  if (r === 2) html += '<div class="bg-[#6a6a6a] border-r-2 border-[#217346] flex items-center justify-center pt-[2px] text-[#eee] text-[12.500px] [font-family:\'Open_Sans\',sans-serif]">' + r + '</div>';
  else if (r === 1) html += '<div class="bg-[#0a0a0a] border-r border-b border-[#555] flex items-center justify-center text-[#ddd] text-[12.500px] [font-family:\'Open_Sans\',sans-serif]">' + r + '</div>';
  else html += '<div class="bg-[#0a0a0a] border-r border-b border-[#555] flex items-center justify-center pt-[2px] text-[#ddd] text-[12.500px] [font-family:\'Open_Sans\',sans-serif]">' + r + '</div>';
  if (r === 1) {
    headers.forEach(h => {
      html += '<div class="bg-[#3eb285] border-r border-white text-white font-bold flex items-center pl-[3px] overflow-hidden"><span class="overflow-hidden whitespace-nowrap">' + h + '</span>' + filterBtn + '</div>';
    });
  } else {
    data[r - 2].forEach((v, c) => { html += '<div class="' + cellClass(c) + '">' + v.replace('&', '&amp;') + '</div>'; });
  }
  html += '<div class="' + gridCell + '"></div>';
  if (r <= 4) {
    html += '<div class="bg-[#86d7b5] border-l border-r border-b border-black pl-[3px] pt-px leading-[18px] whitespace-nowrap">' + lookup[r - 1][0] + '</div>';
    if (r === 1) html += '<div class="bg-[#ffcc99] text-[#3f3f76] border-r border-b border-[#7f7f7f] pl-[3px] pt-px leading-[18px]">' + lookup[0][1] + '</div>';
    else if (r === 2) html += '<div class="relative bg-[#f2f2f2] text-[#fa7d00] font-bold border-r border-b border-[#7f7f7f] pl-[3px] pt-px text-[13px] leading-[18px]">' + lookup[1][1] + '<span class="absolute -left-px -top-px -right-px -bottom-px border-2 border-[#217346]"></span><span class="absolute -right-[3px] -bottom-[3px] w-[5px] h-[5px] bg-[#217346] border border-white"></span></div>';
    else html += '<div class="bg-[#f2f2f2] text-[#fa7d00] font-bold border-r border-b border-[#7f7f7f] pl-[3px] pt-px text-[14px] leading-[18px]">' + lookup[r - 1][1] + '</div>';
  } else {
    html += '<div class="' + gridCell + '"></div><div class="' + gridCell + '"></div>';
  }
  html += '<div class="' + gridCell + '"></div>';
}
document.getElementById('sheet').innerHTML = html;
</script>
</body>
</html>
